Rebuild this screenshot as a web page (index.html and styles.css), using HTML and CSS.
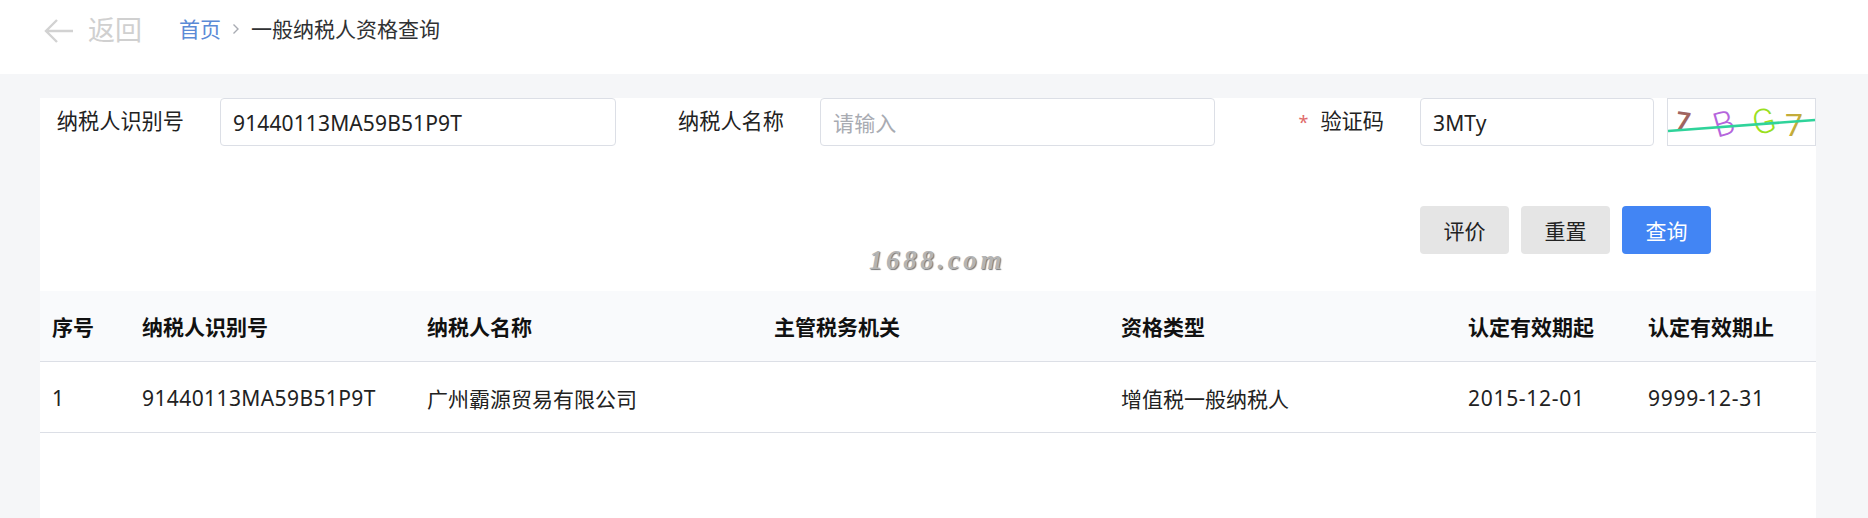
FILE: index.html
```html
<!DOCTYPE html>
<html lang="zh-CN">
<head>
  <meta charset="UTF-8">
  <title>一般纳税人资格查询</title>
  <link rel="stylesheet" href="styles.css">
</head>
<body>

  <!-- top bar -->
  <div class="topbar">
    <a class="back">
      <svg class="back-icon" width="30" height="26" viewBox="0 0 30 26">
        <path d="M13 2 L2 13 L13 24 M2 13 H29" fill="none" stroke="#d2d2d2" stroke-width="2.4"/>
      </svg>
      <span class="back-text">返回</span>
    </a>
    <div class="crumbs">
      <a class="crumb-link">首页</a>
      <svg class="crumb-sep" width="8" height="12" viewBox="0 0 8 12">
        <path d="M1.5 1.5 L6 6 L1.5 10.5" fill="none" stroke="#a8abb2" stroke-width="1.4"/>
      </svg>
      <span>一般纳税人资格查询</span>
    </div>
  </div>

  <div class="card">
    <!-- search form -->
    <div class="form-row">
      <label class="label">纳税人识别号</label>
      <input class="input" type="text" value="91440113MA59B51P9T">
      <label class="label">纳税人名称</label>
      <input class="input" type="text" placeholder="请输入">
      <label class="label"><span class="star">*</span>验证码</label>
      <input class="input" type="text" value="3MTy">
      <svg class="captcha" width="149" height="48" viewBox="0 0 149 48">
        <rect x="0.5" y="0.5" width="148" height="47" fill="#fff" stroke="#dcdfe6"/>
        <text x="9" y="32" class="cap-small" fill="#a0645f" transform="rotate(8 18 24)">7</text>
        <text x="46" y="37" class="cap-mid" fill="#b565dc" transform="rotate(-16 58 24)">B</text>
        <text x="85" y="35" class="cap-mid" fill="#9ae01e" transform="rotate(-14 97 22)">G</text>
        <text x="118" y="38" class="cap-last" fill="#c4ac3a">7</text>
        <path d="M1 33 L148 22" stroke="#2fd39a" stroke-width="2.6"/>
      </svg>
    </div>

    <div class="btn-row">
      <button class="btn">评价</button>
      <button class="btn">重置</button>
      <button class="btn btn-primary">查询</button>
    </div>

    <div class="watermark">1688.com</div>

    <!-- result table -->
    <table class="result">
      <colgroup>
        <col class="col-no">
        <col class="col-id">
        <col class="col-name">
        <col class="col-org">
        <col class="col-type">
        <col class="col-start">
        <col class="col-end">
      </colgroup>
      <thead>
        <tr>
          <th>序号</th>
          <th>纳税人识别号</th>
          <th>纳税人名称</th>
          <th>主管税务机关</th>
          <th>资格类型</th>
          <th>认定有效期起</th>
          <th>认定有效期止</th>
        </tr>
      </thead>
      <tbody>
        <tr>
          <td>1</td>
          <td class="num">91440113MA59B51P9T</td>
          <td>广州霸源贸易有限公司</td>
          <td></td>
          <td>增值税一般纳税人</td>
          <td class="date">2015-12-01</td>
          <td class="date">9999-12-31</td>
        </tr>
      </tbody>
    </table>
  </div>

</body>
</html>
```

FILE: styles.css
```css
html, body {
  height: 100%;
  overflow: hidden;
}

body {
  margin: 0;
  font-family: "Noto Sans", "Noto Sans CJK SC", sans-serif;
  font-size: 21px;
  color: #303133;
  background: #f5f6f8;
}

.topbar {
  display: flex;
  align-items: center;
  height: 62px;
  padding: 0 0 12px 44px;
  background: #fff;
}

.back {
  display: flex;
  align-items: center;
  gap: 14px;
  width: 135px;
  font-size: 27px;
  color: #d0d0d0;
}

.back-text {
  padding-bottom: 4px;
  line-height: 1;
}

.crumbs {
  display: flex;
  align-items: center;
  padding-bottom: 4px;
  line-height: 1;
}

.crumb-link {
  color: #5b8ad6;
}

.crumb-sep {
  margin: 0 11px 0 11px;
}

.card {
  position: relative;
  margin: 24px 52px 0 40px;
  height: 500px;
  background: #fff;
}

.form-row {
  display: grid;
  grid-template-columns: 180px 396px 204px 395px 205px 234px 149px;
  align-items: center;
  height: 48px;
}

.label {
  padding-right: 36px;
  font-size: 21.2px;
  text-align: right;
  color: #222;
  line-height: 46px;
  align-self: start;
}

.star {
  margin-right: 12px;
  font-size: 18px;
  color: #e06a6a;
}

.input {
  box-sizing: border-box;
  width: 100%;
  height: 48px;
  padding: 2px 12px 0;
  border: 1px solid #dcdfe6;
  border-radius: 4px;
  font: inherit;
  letter-spacing: 0.13px;
  color: #222;
  background: #fff;
  outline: none;
}

.input::placeholder {
  color: #a8abb2;
}

.captcha {
  display: block;
  margin-left: 13px;
  margin-right: -13px;
  font-family: Roboto, sans-serif;
  font-weight: 300;
}

.cap-small {
  font-size: 25px;
  font-weight: 700;
}

.cap-mid {
  font-size: 34px;
}

.cap-last {
  font-size: 32px;
  font-weight: 400;
}

.btn-row {
  display: flex;
  justify-content: flex-end;
  gap: 12px;
  margin-top: 60px;
  padding-right: 105px;
}

.btn {
  width: 89px;
  height: 48px;
  border: none;
  border-radius: 4px;
  font: inherit;
  color: #222;
  background: #e5e5e5;
}

.btn-primary {
  color: #fff;
  background: #4285f4;
}

.watermark {
  position: absolute;
  top: 147px;
  left: 829px;
  font-family: "Liberation Serif", serif;
  font-size: 27px;
  font-style: italic;
  font-weight: bold;
  letter-spacing: 3.6px;
  color: #b4b4b4;
  text-shadow: 1px 1px 1px #777;
}

.result {
  width: 100%;
  margin-top: 37px;
  border-collapse: collapse;
  table-layout: fixed;
}

.col-no { width: 90px; }
.col-id { width: 285px; }
.col-name { width: 347px; }
.col-org { width: 347px; }
.col-type { width: 347px; }
.col-start { width: 180px; }

.result th,
.result td {
  padding: 0 0 0 12px;
  text-align: left;
  border-bottom: 1px solid #dcdfe6;
}

.result th {
  height: 70px;
  font-weight: bold;
  color: #111;
  background: #f9fafc;
}

.result td {
  height: 71px;
  padding-top: 2px;
  box-sizing: border-box;
  color: #222;
}

.result .num {
  letter-spacing: 0.4px;
}

.result .date {
  letter-spacing: 0.7px;
}
```
